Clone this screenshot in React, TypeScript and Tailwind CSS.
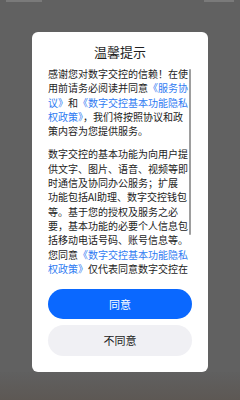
import React from 'react'

type Seg = { t: string; link?: boolean }

const para1: Seg[][] = [
  [{ t: '感谢您对数字交控的信赖！在使' }],
  [{ t: '用前请务必阅读并同意' }, { t: '《服务协', link: true }],
  [{ t: '议》', link: true }, { t: '和' }, { t: '《数字交控基本功能隐私', link: true }],
  [{ t: '权政策》', link: true }, { t: '，我们将按照协议和政' }],
  [{ t: '策内容为您提供服务。' }],
]

const para2: Seg[][] = [
  [{ t: '数字交控的基本功能为向用户提' }],
  [{ t: '供文字、图片、语音、视频等即' }],
  [{ t: '时通信及协同办公服务；扩展' }],
  [{ t: '功能包括AI助理、数字交控钱包' }],
  [{ t: '等。基于您的授权及服务之必' }],
  [{ t: '要，基本功能的必要个人信息包' }],
  [{ t: '括移动电话号码、账号信息等。' }],
  [{ t: '您同意' }, { t: '《数字交控基本功能隐私', link: true }],
  [{ t: '权政策》', link: true }, { t: '仅代表同意数字交控在' }],
]

function Lines({ lines }: { lines: Seg[][] }) {
  return (
    <div>
      {lines.map((line, i) => (
        <div key={i} className="whitespace-nowrap h-[14.3px] leading-[14.3px]">
          {line.map((s, j) => (
            <span key={j} className={s.link ? 'text-[#2f7bf2]' : 'text-[#1c1c1c]'}>
              {s.t}
            </span>
          ))}
        </div>
      ))}
    </div>
  )
}

export default function App() {
  return (
    <div
      className="w-[240px] h-[400px] bg-[#616161] flex flex-col overflow-hidden"
      style={{ fontFamily: '"Noto Sans CJK SC", "Noto Sans", sans-serif' }}
    >
      {/* Status bar */}
      <div className="h-[32px] flex justify-between px-[6px]">
        <div className="h-[2px] w-[36px] bg-[#7a7a7a]" />
        <div className="h-[2px] w-[30px] bg-[#7a7a7a]" />
      </div>

      {/* Dialog */}
      <div className="mx-[32px] h-[340px] bg-white rounded-[6px] flex flex-col px-[16px]">
        <div className="pt-[13px] h-[27px] text-center text-[13px] leading-[14px] text-[#1f1f1f]">
          温馨提示
        </div>

        <div className="relative mt-[8px] h-[210px] overflow-hidden text-[10px]">
          <Lines lines={para1} />
          <div className="mt-[9px]">
            <Lines lines={para2} />
          </div>
          {/* scrollbar */}
          <div className="absolute right-[1px] top-[2px] w-[2px] h-[166px] rounded-full bg-[#9e9e9e]" />
        </div>

        <div className="mt-[12px] flex flex-col gap-[6px]">
          <button className="h-[30px] rounded-full bg-[#0a68ff] text-white text-[11px]">
            同意
          </button>
          <button className="h-[31px] rounded-full bg-[#f0f0f4] text-[#222222] text-[11px]">
            不同意
          </button>
        </div>
      </div>

      {/* dimmed page content */}
      <div className="flex-1 bg-gradient-to-b from-[#606060] to-[#5d5854]" />
    </div>
  )
}
